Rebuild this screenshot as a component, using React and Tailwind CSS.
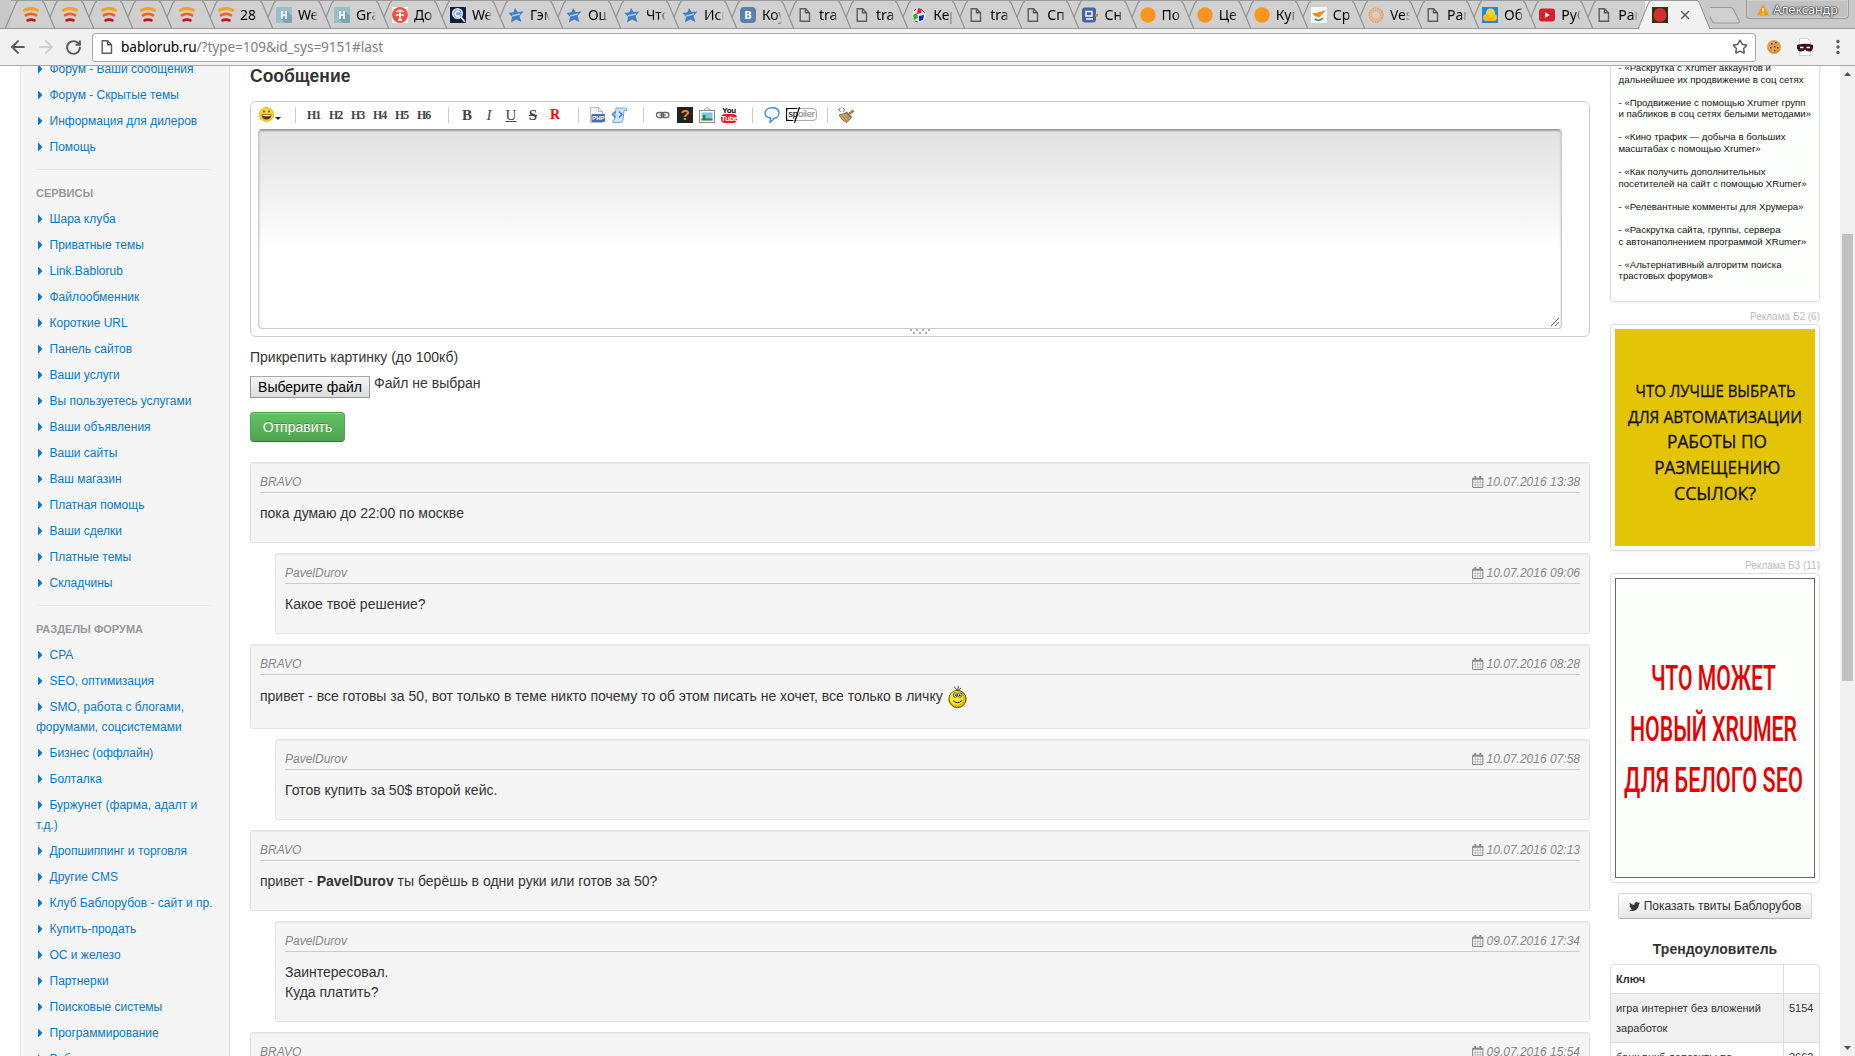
import { FaTwitter } from 'react-icons/fa'
import { ArrowLeft, ArrowRight, RotateCw, Star, X } from 'lucide-react'

const tabs = [
  { icon: 'wifi', title: '28' },
  { icon: 'habr', title: 'We' },
  { icon: 'habr', title: 'Gra' },
  { icon: 'tree', title: 'До' },
  { icon: 'lens', title: 'We' },
  { icon: 'star', title: 'Гэм' },
  { icon: 'star', title: 'Ош' },
  { icon: 'star', title: 'Что' },
  { icon: 'star', title: 'Исп' },
  { icon: 'vk', title: 'Коу' },
  { icon: 'page', title: 'tra' },
  { icon: 'page', title: 'tra' },
  { icon: 'dots', title: 'Кер' },
  { icon: 'page', title: 'tra' },
  { icon: 'page', title: 'Сп' },
  { icon: 'pc', title: 'Сн' },
  { icon: 'orange', title: 'По' },
  { icon: 'orange', title: 'Це' },
  { icon: 'orange', title: 'Куг' },
  { icon: 'cyprus', title: 'Ср' },
  { icon: 'ring', title: 'Ves' },
  { icon: 'page', title: 'Pan' },
  { icon: 'cloud', title: 'Об' },
  { icon: 'youtube', title: 'PyQ' },
  { icon: 'page', title: 'Pan' },
]

const topLinks = ['Форум - Ваши сообщения', 'Форум - Скрытые темы', 'Информация для дилеров', 'Помощь']

const services = [
  'Шара клуба',
  'Приватные темы',
  'Link.Bablorub',
  'Файлообменник',
  'Короткие URL',
  'Панель сайтов',
  'Ваши услуги',
  'Вы пользуетесь услугами',
  'Ваши объявления',
  'Ваши сайты',
  'Ваш магазин',
  'Платная помощь',
  'Ваши сделки',
  'Платные темы',
  'Складчины',
]

const sections = [
  'CPA',
  'SEO, оптимизация',
  'SMO, работа с блогами, форумами, соцсистемами',
  'Бизнес (оффлайн)',
  'Болталка',
  'Буржунет (фарма, адалт и т.д.)',
  'Дропшиппинг и торговля',
  'Другие CMS',
  'Клуб Баблорубов - сайт и пр.',
  'Купить-продать',
  'ОС и железо',
  'Партнерки',
  'Поисковые системы',
  'Программирование',
  'Работа',
]

const posts = [
  { author: 'BRAVO', date: '10.07.2016 13:38', body: 'пока думаю до 22:00 по москве' },
  { author: 'PavelDurov', date: '10.07.2016 09:06', body: 'Какое твоё решение?', reply: true },
  {
    author: 'BRAVO',
    date: '10.07.2016 08:28',
    body: (
      <span className="flex h-6 items-center pb-0.5">
        привет - все готовы за 50, вот только в теме никто почему то об этом писать не хочет, все только в личку
        <Lemon />
      </span>
    ),
  },
  { author: 'PavelDurov', date: '10.07.2016 07:58', body: 'Готов купить за 50$ второй кейс.', reply: true },
  {
    author: 'BRAVO',
    date: '10.07.2016 02:13',
    body: (
      <>
        привет - <b>PavelDurov</b> ты берёшь в одни руки или готов за 50?
      </>
    ),
  },
  {
    author: 'PavelDurov',
    date: '09.07.2016 17:34',
    body: (
      <>
        Заинтересовал.
        <br />
        Куда платить?
      </>
    ),
    reply: true,
  },
  { author: 'BRAVO', date: '09.07.2016 15:54', body: '' },
]

const courses = [
  ['- «Раскрутка с Xrumer аккаунтов и', 152.5],
  ['дальнейшее их продвижение в соц сетях', 185],
  null,
  ['- «Продвижение с помощью Xrumer групп', 187],
  ['и пабликов в соц сетях белыми методами»', 192.5],
  null,
  ['- «Кино трафик — добыча в больших', 167],
  ['масштабах с помощью Xrumer»', 142],
  null,
  ['- «Как получить дополнительных', 147],
  ['посетителей на сайт с помощью XRumer»', 188],
  null,
  ['- «Релевантные комменты для Хрумера»', 185],
  null,
  ['- «Раскрутка сайта, группы, сервера', 162],
  ['с автонаполнением программой XRumer»', 187.5],
  null,
  ['- «Альтернативный алгоритм поиска', 163],
  ['трастовых форумов»', 94.5],
]

const yellowLines = [
  { text: 'ЧТО ЛУЧШЕ ВЫБРАТЬ', x: 100.5, y: 68, size: 17, width: 160 },
  { text: 'ДЛЯ АВТОМАТИЗАЦИИ', x: 100, y: 94, size: 17, width: 174 },
  { text: 'РАБОТЫ ПО', x: 102, y: 119, size: 18.5, width: 100 },
  { text: 'РАЗМЕЩЕНИЮ', x: 102.3, y: 145, size: 18.5, width: 126 },
  { text: 'ССЫЛОК?', x: 100, y: 171, size: 18.5, width: 82 },
]

const redLines = [
  { text: 'ЧТО МОЖЕТ', y: 111, width: 125 },
  { text: 'НОВЫЙ XRUMER', y: 162, width: 167 },
  { text: 'ДЛЯ БЕЛОГО SEO', y: 213, width: 179 },
]

function Lemon() {
  return (
    <svg className="mt-0.5 ml-[5px] h-[22px] w-[19px]" viewBox="0 0 19 22">
      <path d="M6.500 1l3 4M10.500 0l-1 5M13 2l-3.500 3" stroke="#4a4a10" strokeWidth="1" fill="none" />
      <ellipse cx="9.500" cy="13" rx="8.600" ry="8.600" fill="#e8b90a" stroke="#5c4a00" />
      <ellipse cx="8.500" cy="12" rx="6.800" ry="7" fill="#fde723" />
      <circle cx="7.400" cy="9" r="2.200" fill="#fff" stroke="#222" strokeWidth=".8" />
      <circle cx="11.800" cy="9" r="2.200" fill="#fff" stroke="#222" strokeWidth=".8" />
      <path d="M7 8.500h1.500V10H7zM11 8.500h1.500V10H11z" fill="#000" />
      <path d="M5 14.500q4.500 4.500 9 0" stroke="#222" fill="none" />
    </svg>
  )
}

function Favicon({ name }) {
  const cls = 'h-4 w-4 shrink-0'
  switch (name) {
    case 'wifi':
      return (
        <svg className={cls} viewBox="0 0 16 16" fill="none" strokeLinecap="round">
          <path d="M1.500 3.300Q8-.3 14.500 3.300" stroke="#f7a21c" strokeWidth="3" />
          <path d="M3 8.300Q8 5.600 13 8.300" stroke="#f26322" strokeWidth="2.800" />
          <path d="M4.700 13.300Q8 11.800 11.300 13.300" stroke="#c4121f" strokeWidth="2.800" />
        </svg>
      )
    case 'habr':
      return (
        <svg className={cls} viewBox="0 0 16 16">
          <path d="M0 0h16v16H0z" fill="#9bbfca" />
          <path d="M5 12l6-8 5 5v7H9z" fill="#7fa3ae" />
          <path d="M6 4v8M10 4v8M6 8h4" stroke="#fff" strokeWidth="1.600" />
        </svg>
      )
    case 'tree':
      return (
        <svg className={cls} viewBox="0 0 16 16">
          <path d="M0 0h16v16H0z" fill="#fff" />
          <circle cx="8" cy="8" r="8" fill="#ee5246" />
          <path d="M8 3v10M4.500 5q3.500-3.500 7 0M4 8.500q4-2 8 0M6 13h4" stroke="#fff" strokeWidth="1.600" fill="none" />
        </svg>
      )
    case 'lens':
      return (
        <svg className={cls} viewBox="0 0 16 16">
          <path d="M0 0h16v16H0z" fill="#0c1f3c" />
          <circle cx="7.500" cy="6.500" r="4.800" fill="#7fa6d0" stroke="#dfe8f2" strokeWidth="1.500" />
          <path d="M9.500 5a2.500 2.500 0 1 0 0 3.500" stroke="#fff" fill="none" strokeWidth="1.300" />
          <path d="M11 10l4 5" stroke="#dfe8f2" strokeWidth="1.800" />
        </svg>
      )
    case 'star':
      return (
        <svg className={cls} viewBox="0 0 16 16">
          <path d="M7 1l2.700 4 5.800-.5-4 4.500 2 6-5.500-2.500L3 15.500l1-5.800L.5 6l5-.8z" fill="#3f7fc6" />
          <path d="M4 9l8-2" stroke="#a8c9ec" strokeWidth="1.500" />
        </svg>
      )
    case 'vk':
      return (
        <span className={`${cls} rounded-sm bg-[#5b80ab] text-center font-['Open_Sans',sans-serif] text-[11px] leading-4 font-bold text-white`}>
          B
        </span>
      )
    case 'dots':
      return (
        <svg className={cls} viewBox="0 0 16 16">
          <circle cx="8" cy="8" r="7" fill="#e6e6e6" />
          <path d="M7 1l4 1-1 4-4 1z" fill="#e8173f" />
          <path d="M2 8l4-2 1 5-4 2z" fill="#31b525" />
          <path d="M8 9l5-1-1 5-4 1z" fill="#1625c5" />
          <path d="M11 3l3 3M3 4l2-2M4 14l3 1" stroke="#555" />
        </svg>
      )
    case 'pc':
      return (
        <svg className={cls} viewBox="0 0 16 16">
          <rect width="14" height="15" y=".5" rx="3" fill="#47629f" />
          <path d="M4 4.500h6v4.500H4zM4 12h7" stroke="#fff" strokeWidth="1.400" fill="none" />
          <path d="M13 7h3v2.500h-3z" fill="#f0761c" />
        </svg>
      )
    case 'orange':
      return (
        <svg className={cls} viewBox="0 0 16 16">
          <circle cx="8" cy="8" r="7.700" fill="#f8951f" />
        </svg>
      )
    case 'cyprus':
      return (
        <svg className={cls} viewBox="0 0 16 16">
          <path d="M0 0h16v16H0z" fill="#f7f7f7" />
          <path d="M1 6.500l6-1 8-2.500-4 4.500-3 3-4-1.500z" fill="#f08c1d" />
          <path d="M4 12q4 3 8-1" stroke="#2c8f8a" strokeWidth="1.600" fill="none" />
        </svg>
      )
    case 'ring':
      return (
        <svg className={cls} viewBox="0 0 16 16" fill="none">
          <circle cx="8" cy="8" r="6.700" stroke="#f4a35c" strokeWidth="2" strokeDasharray="1.800 .7" />
          <circle cx="8" cy="8" r="4.600" stroke="#f4a35c" strokeWidth="1.500" strokeDasharray="1.500 .5" />
        </svg>
      )
    case 'cloud':
      return (
        <svg className={cls} viewBox="0 0 16 16">
          <path d="M0 0h16v16H0z" fill="#168de2" />
          <circle cx="8.500" cy="6" r="4.500" fill="#ffd22e" />
          <circle cx="4.500" cy="10.500" r="3.500" fill="#fcb814" />
          <circle cx="11.500" cy="10.500" r="3.500" fill="#ffc31f" />
          <path d="M4 10h8v4H4z" fill="#fcb814" />
        </svg>
      )
    case 'youtube':
      return (
        <svg className={cls} viewBox="0 0 16 16">
          <rect y="1.500" width="16" height="13" rx="3" fill="#d6232a" />
          <path d="M6 5.300l4.700 2.700L6 10.700z" fill="#fff" />
        </svg>
      )
    case 'record':
      return (
        <svg className={cls} viewBox="0 0 16 16">
          <path d="M0 0h16v16H0z" fill="#33330f" />
          <ellipse cx="8" cy="8" rx="6.500" ry="7" fill="#d23030" />
        </svg>
      )
    default:
      return <PageIcon className={cls} />
  }
}

function PageIcon({ className }) {
  return (
    <svg className={className} viewBox="0 0 16 16" fill="none" stroke="#5c5c5c" strokeWidth="1.400">
      <path d="M3.200 1.700h5.300l4 4v8.600H3.200z" />
      <path d="M8.500 1.700v4h4" />
    </svg>
  )
}

// slanted seam between two neighbouring tabs
function Seam({ first }) {
  return (
    <svg className="absolute top-0 -left-2 h-7 w-4" viewBox="0 0 16 28" fill="none" stroke="#919191" strokeWidth="1.200">
      {first ? (
        <path d="M2 28L13 2q.8-1.500 2-1.500" />
      ) : (
        <>
          <path d="M0 .5q1.500 0 2.300 2L13 28" />
          <path d="M16 .5q-1.500 0-2.300 2L8 16" />
        </>
      )}
    </svg>
  )
}

function TabStrip() {
  return (
    <div className="flex h-[29px] border-b border-[#9b9b9b] bg-[#c9c9c9] pl-[11px]">
      {[0, 1, 2, 3, 4].map((n) => (
        <div
          key={n}
          className={`relative border-t border-[#9b9b9b] bg-[#d0d0d0] pt-1.5 pl-3 ${n === 4 ? 'w-[42.5px]' : 'w-[39.100px]'}`}
        >
          <Seam first={n === 0} />
          <Favicon name="wifi" />
        </div>
      ))}
      {tabs.map((tab, i) => (
        <div
          key={i}
          className={`relative flex gap-[6px] border-t border-[#9b9b9b] bg-[#d0d0d0] pt-1.5 pl-2 ${i < 9 ? 'w-[58px]' : 'w-[57.100px]'}`}
        >
          <Seam />
          <Favicon name={tab.icon} />
          <span className="w-[20px] overflow-hidden mask-r-from-70% font-['Noto_Sans',sans-serif] text-[14px] leading-4 whitespace-nowrap text-black">
            {tab.title}
          </span>
        </div>
      ))}
      <div className="relative h-[29px] w-[58px] border-t border-[#9b9b9b] bg-[#f2f1f1]">
        <svg className="absolute -top-px -left-[7px] h-[29px] w-[14px]" viewBox="0 0 14 29">
          <path d="M0 29L11 2q.8-1.500 3-1.500V29z" fill="#f2f1f1" />
          <path d="M0 29L11 2q.8-1.500 3-1.500" fill="none" stroke="#919191" />
        </svg>
        <svg className="absolute -top-px -right-[7px] h-[29px] w-[14px]" viewBox="0 0 14 29">
          <path d="M14 29L3 2Q2.200.5 0 .5V29z" fill="#f2f1f1" />
          <path d="M14 0L14 29L3 2Q2.200.5 0 0z" fill="#c9c9c9" />
          <path d="M14 29L3 2Q2.200.5 0 .5" fill="none" stroke="#919191" />
        </svg>
        <div className="relative flex items-center gap-[10px] pt-1.5 pl-[7px]">
          <Favicon name="record" />
          <X className="h-3.5 w-3.5 text-[#5a5a5a]" strokeWidth={2.4} />
        </div>
      </div>
      <svg className="mt-1.5 ml-[2px] h-[18px] w-[36px]" viewBox="0 0 36 18">
        <path d="M3 1.500h22q2.500 0 3.500 2l5.500 11q.8 2.500-1.500 2.500H10.500q-2.500 0-3.500-2.200L1.500 3.500Q1 1.500 3 1.500z" fill="#d0d0d0" stroke="#9b9b9b" strokeWidth="1.200" />
      </svg>
      <div className="mr-1.5 ml-auto flex h-[19px] w-[103px] items-center justify-center gap-1 rounded-b border border-t-0 border-[#9a9a9a] bg-[#c2c2c2] pt-1 pb-0.5 shadow-[inset_0_0_0_1px_#cfcfcf]">
        <svg className="h-3 w-3" viewBox="0 0 12 12">
          <path d="M6 0l6 11.500H0z" fill="#f39a1d" />
          <path d="M6 4v4M6 9v1.300" stroke="#fff" strokeWidth="1.300" />
        </svg>
        <span className="font-['Noto_Sans',sans-serif] text-[12.500px] leading-3 text-white [text-shadow:0_0_1px_#333,0_0_1px_#333,0_0_1px_#333,0_0_2px_#333]">
          Александр
        </span>
      </div>
    </div>
  )
}

function AddressBar() {
  return (
    <div className="flex h-[37px] items-center border-b border-[#a9a9a9] bg-[#f2f1f1]">
      <ArrowLeft className="ml-2 h-5 w-5 text-[#5a5a5a]" strokeWidth={2.4} />
      <ArrowRight className="ml-2 h-5 w-5 text-[#cfcfcf]" strokeWidth={2.4} />
      <RotateCw className="ml-[9px] h-[17px] w-[17px] text-[#5a5a5a]" strokeWidth={2.8} />
      <div className="ml-[10px] flex h-[29px] w-[1664px] items-center rounded-[3px] border border-[#a6a6a6] bg-white">
        <PageIcon className="ml-[6px] h-4 w-4" />
        <span className="ml-[6px] w-[266px] font-['Noto_Sans',sans-serif] text-[13.700px] tracking-[-0.1px] whitespace-nowrap text-[#808080]">
          <span className="text-black">bablorub.ru</span>/?type=109&amp;id_sys=9151#last
        </span>
        <Star className="mr-[7px] ml-auto h-4 w-4 text-[#5a5a5a]" strokeWidth={2.2} />
      </div>
      <svg className="ml-[10px] h-4 w-4" viewBox="0 0 16 16">
        <circle cx="8" cy="8" r="7" fill="#e0a04c" />
        <path d="M2 10q5 6 12 0a7 7 0 0 1-12 0z" fill="#b9772a" />
        <path d="M5 4h1.500v1.500H5zM9 3h1.500v1.500H9zM4 8h1.500v1.500H4zM8 7h1.500v1.500H8zM11 8h1.500v1.500H11zM8 11h1.500v1H8z" fill="#6e3b10" />
      </svg>
      <svg className="ml-[15px] h-[18px] w-4" viewBox="0 0 16 18">
        <path d="M2.500.5h8l3 3v14h-11z" fill="#fafafa" stroke="#d0d0d0" />
        <path d="M0 7q8-2.500 16 0v3q-1 4-4 3.500-2.500 0-4-2-1.500 2-4 2-3 .5-4-3.500z" fill="#3a1419" />
        <path d="M3 9.500h3.500M9.500 9.500H13" stroke="#fff" strokeWidth="1.500" />
      </svg>
      <svg className="ml-[23px] h-4 w-1" viewBox="0 0 4 16" fill="#5a5a5a">
        <circle cx="2" cy="2.500" r="1.700" />
        <circle cx="2" cy="8" r="1.700" />
        <circle cx="2" cy="13.500" r="1.700" />
      </svg>
    </div>
  )
}

function LinkList({ items }) {
  return (
    <ul>
      {items.map((item) => (
        <li key={item} className="py-[3px]">
          <a className="text-[#0b78c4]">
            <svg className="mr-[7px] ml-[2px] inline-block h-2 w-[4.500px] align-baseline" viewBox="0 0 4.5 8">
              <path d="M0 0h.6l3.900 4L.6 8H0z" fill="#0b78c4" />
            </svg>
            {item}
          </a>
        </li>
      ))}
    </ul>
  )
}

function GroupTitle({ children }) {
  return (
    <>
      <div className="mt-[9px] ml-px h-0.5 border-b border-white bg-[#e5e5e5]" />
      <h4 className="mt-[12px] mb-[3px] text-[11px] leading-5 font-bold text-[#999] uppercase">{children}</h4>
    </>
  )
}

function Sidebar() {
  return (
    <nav className="ml-5 w-[210px] shrink-0 border-x border-[#e3e3e3] bg-[#f5f5f5] pr-4 pl-[15px] text-[12px] leading-5">
      <div className="-mt-2.5">
        <LinkList items={topLinks} />
        <GroupTitle>Сервисы</GroupTitle>
        <LinkList items={services} />
        <GroupTitle>Разделы форума</GroupTitle>
        <LinkList items={sections} />
      </div>
    </nav>
  )
}

const Sep = ({ className }) => <span className={`h-4 w-px shrink-0 bg-[#ccc] ${className}`} />

function EditorTools() {
  const glyph = "flex h-4 w-4 shrink-0 items-center justify-center font-['Liberation_Serif',serif] text-[15px] leading-4 text-[#444]"
  return (
    <div className="flex h-[27px] items-center pb-0.5 pl-2">
      <svg className="h-[15px] w-[15px]" viewBox="0 0 15 15">
        <circle cx="7.500" cy="7.500" r="7" fill="#f8d631" stroke="#e3b51e" />
        <path d="M2.500 7.500h10q-.5 5-5 5t-5-5z" fill="#5b3200" />
        <path d="M3.500 8h8v1.200h-8z" fill="#fff" />
        <circle cx="5" cy="4.500" r=".9" fill="#5b3200" />
        <circle cx="10" cy="4.500" r=".9" fill="#5b3200" />
      </svg>
      <svg className="mt-2 ml-[1px] h-[3px] w-[6px]" viewBox="0 0 6 3">
        <path d="M0 0h6L3 3z" fill="#222" />
      </svg>
      <Sep className="mr-[11px] ml-[14px]" />
      <div className="flex gap-[6px]">
        {['H1', 'H2', 'H3', 'H4', 'H5', 'H6'].map((h) => (
          <span key={h} className="w-4 font-['Liberation_Serif',serif] text-[12px] leading-4 font-bold tracking-[-1px] text-[#444]">
            {h}
          </span>
        ))}
      </div>
      <Sep className="mr-[10px] ml-[15px]" />
      <div className="flex gap-[6px]">
        <span className={`${glyph} font-bold`}>B</span>
        <span className={`${glyph} italic`}>I</span>
        <span className={`${glyph} underline`}>U</span>
        <span className={`${glyph} font-bold line-through`}>S</span>
        <b className="flex h-4 w-4 items-center justify-center font-['Liberation_Serif',serif] text-[14px] leading-4 text-[#f00]">R</b>
      </div>
      <Sep className="mr-[10px] ml-[15px]" />
      <svg className="h-4 w-4" viewBox="0 0 16 16">
        <path d="M1.500.5h8l4 4v11h-12z" fill="#f4f4f4" stroke="#bbb" />
        <path d="M9.500.5v4h4" fill="none" stroke="#bbb" />
        <rect x="2.500" y="7" width="13.500" height="8" rx="1" fill="#4a6ea9" />
        <text x="9.300" y="13.200" textAnchor="middle" fontSize="6" fontWeight="bold" fill="#fff" fontFamily="Liberation Sans">PHP</text>
      </svg>
      <svg className="ml-[6px] h-4 w-4" viewBox="0 0 16 16">
        <path d="M5 1h9q2 0 1.500 2.500H13L12 13q-.5 2.500-3 2.500H2q-1-2.500 1.500-3z" fill="#cfe4fa" stroke="#6ca6e0" />
        <path d="M4.500 4.500L1.500 7.500l3 3M8 4.500l3 3-3 3" fill="none" stroke="#3d86d6" strokeWidth="1.600" />
      </svg>
      <Sep className="mr-[11px] ml-[16px]" />
      <svg className="h-4 w-4" viewBox="0 0 16 16" fill="none" stroke="#666" strokeWidth="1.300">
        <rect x="1.500" y="5.500" width="7" height="5" rx="2.500" />
        <rect x="6.500" y="5.500" width="7.500" height="5" rx="2.500" />
        <path d="M4.500 8H11" />
      </svg>
      <span className="ml-[6px] h-4 w-4 bg-[#222] text-center text-[15px] leading-4 font-bold text-[#f08a1c]">?</span>
      <svg className="ml-[6px] h-4 w-4" viewBox="0 0 16 16">
        <path d="M5 3l3-2.500L11 3" fill="none" stroke="#999" />
        <rect x=".5" y="3.500" width="15" height="12" fill="#fff" stroke="#8f8f7a" />
        <path d="M2.500 5.500h11v8h-11z" fill="#7cc4ee" />
        <path d="M2.500 11.500h11v2h-11zM4 8h2.500v4H4z" fill="#3f7d33" />
      </svg>
      <span className="ml-[6px] flex h-4 w-4 flex-col items-center text-[8px] font-bold tracking-[-0.4px] text-black">
        <span className="h-[7px] leading-[7px]">You</span>
        <span className="h-[9px] w-4 rounded-sm bg-[#f01818] text-center leading-[9px] text-white">Tube</span>
      </span>
      <Sep className="mr-[11px] ml-[15px]" />
      <svg className="h-4 w-4" viewBox="0 0 16 16">
        <path d="M8 .8c4.200 0 7 2 7 5.200s-2.500 5-4.500 5.200L6 15.500l.5-4.500C3 10.600 1 9 1 6S4 .8 8 .8z" fill="#fff" stroke="#3b8fe0" strokeWidth="1.400" />
      </svg>
      <span className="relative ml-[6px] h-[13px] w-[31px] rounded-sm border border-[#aaa] text-center text-[9.500px] leading-[10px] tracking-tight text-[#777]">
        <span className="text-black">sp</span>oiler
        <svg className="absolute -top-0.5 -left-px h-4 w-[14px]" viewBox="0 0 14 16" fill="none" stroke="#000">
          <path d="M11 1.500H.5v12H7M13.500 0L8.500 16" strokeWidth="1.200" />
        </svg>
      </span>
      <Sep className="mr-[10px] ml-[10px]" />
      <svg className="h-4 w-4" viewBox="0 0 16 16">
        <path d="M2.500.8L.8 2.800l1.700 2M5 .8l1.700 2L5 4.800" fill="none" stroke="#555" />
        <path d="M15.500 3.500L11 7" stroke="#b5722c" strokeWidth="2.400" />
        <path d="M1 8l7-2 5 5-4 4.500Q4 14 1 8z" fill="#cfa566" stroke="#80572a" strokeWidth=".8" />
        <path d="M8 5l5.500 6" stroke="#777" strokeWidth="2" />
        <path d="M4 8.500l5 6M6.500 8l4.500 5" stroke="#94693a" strokeWidth=".7" />
      </svg>
    </div>
  )
}

function Editor() {
  return (
    <div className="mt-[13px] h-[236px] rounded-md border border-[#ccc]">
      <EditorTools />
      <div className="relative ml-[7px] h-[200px] w-[1304px] rounded border border-[#ccc] border-t-[#999] bg-linear-to-b from-[#e3e3e3] from-5% to-white to-[60%] shadow-[inset_0_1px_2px_rgba(0,0,0,0.300)]">
        <svg className="absolute right-0.5 bottom-0.5 h-2 w-2" viewBox="0 0 8 8" stroke="#555">
          <path d="M0 8l8-8M4 8l4-4" />
        </svg>
      </div>
      <svg className="ml-[659px] h-[6px] w-[21px]" viewBox="0 0 21 6" fill="#aaa">
        <path d="M0 0h2v2H0zM6 0h2v2H6zM12 0h2v2h-2zM18 0h2v2h-2zM3 3h2v2H3zM9 3h2v2H9zM15 3h2v2h-2z" />
      </svg>
    </div>
  )
}

function CalendarIcon() {
  return (
    <svg className="mr-[3px] h-3 w-[12px]" viewBox="0 0 12 12">
      <path d="M.6 2.200h10.300v9.300H.6z" fill="#fafafa" stroke="#888" />
      <path d="M.5 2h10.500v1.800H.5zM2.300 0h1.800v3H2.300zM7.400 0h1.800v3H7.400z" fill="#888" />
      <path d="M3.200 4v7.500M5.750 4v7.500M8.300 4v7.500M.5 6.300H11M.5 8.900H11" stroke="#999" strokeWidth=".5" />
    </svg>
  )
}

function Post({ author, date, body, reply }) {
  return (
    <article
      className={`${reply ? 'ml-[25px]' : ''} mb-2.5 rounded-[3px] border border-[#e3e3e3] bg-[#f5f5f5] px-[9px] pt-[9px] pb-[19px] shadow-[inset_0_1px_1px_rgba(0,0,0,0.050)]`}
    >
      <header className="mb-2.5 flex items-center justify-between border-b border-[#ccc] text-[12px] leading-5 text-[#888] italic">
        <span>{author}</span>
        <span className="flex items-center">
          <CalendarIcon />
          {date}
        </span>
      </header>
      <div>{body}</div>
    </article>
  )
}

function Main() {
  return (
    <main className="ml-5 w-[1340px] shrink-0">
      <h4 className="h-[22px] text-[17.500px] leading-5 font-bold">Сообщение</h4>
      <Editor />
      <p className="mt-[10px]">Прикрепить картинку (до 100кб)</p>
      <div className="mt-2 flex h-[24px] items-start">
        <button className="mt-px h-[22px] w-[120px] border border-[#999] border-t-[#aaa] bg-linear-to-b from-[#f6f6f6] to-[#dcdcdc] text-[14px] leading-5 text-black">
          Выберите файл
        </button>
        <span className="ml-1 leading-[17px]">Файл не выбран</span>
      </div>
      <button className="mt-[13px] mb-5 block h-[30px] w-[95px] rounded border border-[#51a351] border-b-[#387038] bg-linear-to-b from-[#62c462] to-[#51a351] text-[14px] leading-5 text-white shadow-[inset_0_1px_0_rgba(255,255,255,0.200)] [text-shadow:0_-1px_0_rgba(0,0,0,0.250)]">
        Отправить
      </button>
      {posts.map((post) => (
        <Post key={post.date} {...post} />
      ))}
    </main>
  )
}

const Thumbnail = ({ children }) => (
  <div className="rounded border border-[#ddd] p-1 shadow-[0_1px_3px_rgba(0,0,0,0.055)]">{children}</div>
)

function Ads() {
  return (
    <aside className="ml-5 w-[210px] shrink-0">
      <div className="-mt-5">
        <Thumbnail>
          <svg className="block h-[246px] w-[200px] bg-[#fdfffc]" viewBox="0 0 200 246" fontFamily="Liberation Sans" fontSize="9.600" fill="#111">
            {courses.map(
              (row, i) =>
                row && (
                  <text key={row[0]} x="3.500" y={20 + i * 11.57} textLength={row[1]} lengthAdjust="spacingAndGlyphs">
                    {row[0]}
                  </text>
                ),
            )}
          </svg>
        </Thumbnail>
      </div>
      <p className="mt-[5px] h-[17px] text-right text-[10px] leading-5 text-[#bbb]">Реклама Б2 (6)</p>
      <Thumbnail>
        <svg className="block h-[217px] w-[200px] bg-[#e4c406]" viewBox="0 0 200 217" fontFamily="Open Sans" fill="#111" stroke="#111" strokeWidth=".35">
          {yellowLines.map((line) => (
            <text key={line.text} x={line.x} y={line.y} fontSize={line.size} textAnchor="middle" textLength={line.width} lengthAdjust="spacingAndGlyphs">
              {line.text}
            </text>
          ))}
        </svg>
      </Thumbnail>
      <p className="mt-[5px] h-[17px] text-right text-[10px] leading-5 text-[#bbb]">Реклама Б3 (11)</p>
      <Thumbnail>
        <svg className="block h-[300px] w-[200px] border border-[#666] bg-[#fdfffc]" viewBox="0 0 198 298" fontFamily="Roboto" fill="#e60000">
          {redLines.map((line) => (
            <text key={line.text} x="97.500" y={line.y} fontSize="35" fontWeight="500" textAnchor="middle" textLength={line.width} lengthAdjust="spacingAndGlyphs">
              {line.text}
            </text>
          ))}
        </svg>
      </Thumbnail>
      <button className="mx-auto mt-2.5 flex h-[26px] w-[194px] items-center justify-center gap-1 rounded-[3px] border border-[#d4d4d4] border-b-[#b3b3b3] bg-linear-to-b from-white to-[#e6e6e6] text-[12px] leading-5">
        <FaTwitter className="h-[11px] w-[11px]" />
        Показать твиты Баблорубов
      </button>
      <h5 className="mt-5 text-center text-[14px] leading-5 font-bold">Трендоуловитель</h5>
      <div className="mt-[5px] grid grid-cols-[172px_1fr] rounded-t border border-[#ddd] text-[11px] leading-5">
        <b className="h-7 px-[5px] py-1">Ключ</b>
        <span className="border-l border-[#ddd]" />
        <span className="border-t border-[#ddd] bg-[#f0f0f0] px-[5px] py-1">игра интернет без вложений заработок</span>
        <span className="border-t border-l border-[#ddd] bg-[#f0f0f0] px-[5px] py-1">5154</span>
        <span className="border-t border-[#ddd] px-[5px] py-1">банк внкб депозиты по</span>
        <span className="border-t border-l border-[#ddd] px-[5px] py-1">2662</span>
      </div>
    </aside>
  )
}

function ScrollBar() {
  return (
    <div className="ml-auto flex w-[15px] shrink-0 flex-col items-center bg-[#f1f1f1]">
      <svg className="mt-1.5 h-1 w-[7px]" viewBox="0 0 7 4">
        <path d="M0 4l3.500-4L7 4z" fill="#505050" />
      </svg>
      <div className="mt-[158px] h-[447px] w-[11px] bg-[#c1c1c1]" />
      <svg className="mt-auto mb-1.5 h-1 w-[7px]" viewBox="0 0 7 4">
        <path d="M0 0l3.500 4L7 0z" fill="#505050" />
      </svg>
    </div>
  )
}

export default function App() {
  return (
    <div className="flex h-[1056px] w-[1855px] flex-col overflow-hidden bg-white font-['Liberation_Sans',sans-serif] text-[14px] leading-5 text-[#333]">
      <TabStrip />
      <AddressBar />
      <div className="flex h-[990px] overflow-hidden">
        <Sidebar />
        <Main />
        <Ads />
        <ScrollBar />
      </div>
    </div>
  )
}
